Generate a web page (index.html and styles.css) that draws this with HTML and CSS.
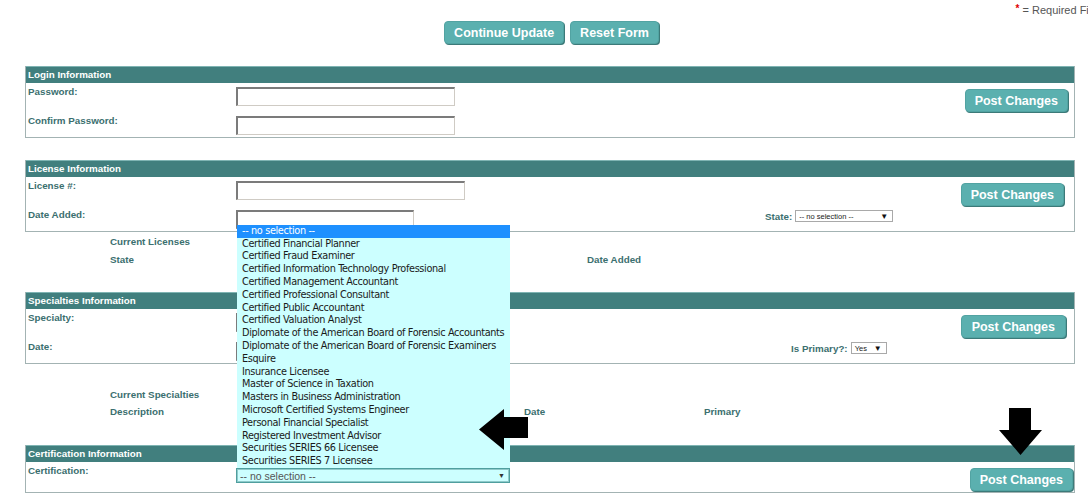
FILE: index.html
```html
<!DOCTYPE html>
<html>
<head>
<meta charset="utf-8">
<title>Update Profile</title>
<link rel="stylesheet" href="styles.css">
</head>
<body>
<div class="req"><span class="star">*</span> = Required Fields</div>
<div class="top-actions">
  <button class="btn btn-top">Continue Update</button>
  <button class="btn btn-top">Reset Form</button>
</div>

<section class="sec sec-login">
  <div class="sec-head">Login Information</div>
  <div class="sec-body">
    <div class="fields">
      <div class="lbl">Password:</div><div><div class="txt w219"></div></div><div></div>
      <div class="lbl">Confirm Password:</div><div><div class="txt w219"></div></div><div></div>
    </div>
    <div class="actions act-login"><button class="btn">Post Changes</button></div>
  </div>
</section>

<section class="sec sec-lic">
  <div class="sec-head">License Information</div>
  <div class="sec-body">
    <div class="fields">
      <div class="lbl">License #:</div><div><div class="txt w229"></div></div><div></div>
      <div class="lbl">Date Added:</div><div><div class="txt w178"></div></div>
      <div class="extra extra-state"><span class="lbl-in">State:</span><div class="mini-sel w98"><span>-- no selection --</span><span class="tri">&#9660;</span></div></div>
    </div>
    <div class="actions act-lic"><button class="btn">Post Changes</button></div>
  </div>
</section>
<div class="list list-lic">
  <div class="span-all">Current Licenses</div>
  <div>State</div><div>Date Added</div>
</div>

<section class="sec sec-spec">
  <div class="sec-head">Specialties Information</div>
  <div class="sec-body">
    <div class="fields">
      <div class="lbl">Specialty:</div><div><div class="txt w219"></div></div><div></div>
      <div class="lbl">Date:</div><div><div class="txt w178"></div></div>
      <div class="extra extra-primary"><span class="lbl-in">Is Primary?:</span><div class="mini-sel w35"><span>Yes</span><span class="tri">&#9660;</span></div></div>
    </div>
    <div class="actions act-spec"><button class="btn btn-wide">Post Changes</button></div>
  </div>
</section>
<div class="list list-spec">
  <div class="span-all">Current Specialties</div>
  <div>Description</div><div>Date</div><div>Primary</div>
</div>

<section class="sec sec-cert">
  <div class="sec-head">Certification Information</div>
  <div class="sec-body">
    <div class="fields">
      <div class="lbl">Certification:</div>
      <div>
        <div class="cert-wrap">
          <ul class="dd-list">
            <li class="cur">-- no selection --</li>
            <li>Certified Financial Planner</li>
            <li>Certified Fraud Examiner</li>
            <li>Certified Information Technology Professional</li>
            <li>Certified Management Accountant</li>
            <li>Certified Professional Consultant</li>
            <li>Certified Public Accountant</li>
            <li>Certified Valuation Analyst</li>
            <li>Diplomate of the American Board of Forensic Accountants</li>
            <li>Diplomate of the American Board of Forensic Examiners</li>
            <li>Esquire</li>
            <li>Insurance Licensee</li>
            <li>Master of Science in Taxation</li>
            <li>Masters in Business Administration</li>
            <li>Microsoft Certified Systems Engineer</li>
            <li>Personal Financial Specialist</li>
            <li>Registered Investment Advisor</li>
            <li>Securities SERIES 66 Licensee</li>
            <li>Securities SERIES 7 Licensee</li>
          </ul>
          <div class="sel-open"><span>-- no selection --</span><span class="tri2">&#9660;</span></div>
        </div>
      </div>
      <div></div>
    </div>
    <div class="actions act-cert"><button class="btn">Post Changes</button></div>
  </div>
</section>

<svg class="arrow arrow-left" width="49" height="41" viewBox="0 0 49 41"><polygon points="0,20.5 25,0 25,8 49,8 49,29 25,29 25,41" fill="#000"/></svg>
<svg class="arrow arrow-down" width="43" height="47" viewBox="0 0 43 47"><polygon points="10,0 32,0 32,22 43,22 21.5,47 0,22 10,22" fill="#000"/></svg>
</body>
</html>
```
FILE: styles.css
```css
html, body {
  margin: 0;
  padding: 0;
  overflow: hidden;
  background: #ffffff;
}
body {
  position: relative;
  width: 1088px;
  height: 504px;
  font-family: "Liberation Sans", Arial, sans-serif;
  color: #3b6f6f;
}

.req {
  text-align: right;
  margin-right: -21px;
  padding-top: 2px;
  font-size: 11px;
  line-height: 14px;
  color: #555555;
  white-space: nowrap;
}
.star {
  color: #e00000;
  font-weight: bold;
  vertical-align: 2px;
  font-size: 10px;
}

.top-actions {
  display: flex;
  justify-content: center;
  gap: 6px;
  margin-top: 4px;
  padding-left: 15px;
}

.btn {
  height: 23px;
  box-sizing: border-box;
  padding: 0 9px;
  font-family: "Liberation Sans", Arial, sans-serif;
  font-weight: bold;
  font-size: 12.5px;
  color: #ffffff;
  background: #5bb0af;
  border: 1px solid #52a3a2;
  border-radius: 4px;
  box-shadow: 1px 1px 0 #3c7a79;
  white-space: nowrap;
}
.btn-wide { padding: 0 10px; }

.sec {
  margin: 22px 0 0 25px;
  width: 1050px;
  box-sizing: border-box;
  border: 1px solid #a3b3b3;
  border-top: 0;
}
.sec-head {
  background: #417f7e;
  border-top: 1px solid #7fb4b3;
  height: 16px;
  line-height: 16px;
  padding-left: 2px;
  color: #ffffff;
  font-weight: bold;
  font-size: 9.8px;
}
.sec-body {
  display: flex;
  align-items: flex-start;
}
.fields {
  flex: 1;
  display: grid;
  grid-template-columns: 208px 500px 1fr;
  row-gap: 10px;
  padding: 4px 0 2px 2px;
  align-items: start;
}
.lbl {
  font-weight: bold;
  font-size: 9.8px;
  line-height: 14px;
  margin-top: -2px;
  color: #3b6f6f;
}
.txt {
  height: 19px;
  box-sizing: border-box;
  background: #ffffff;
  border-style: solid;
  border-width: 2px 1px 1px 2px;
  border-color: #7b7b7b #cfcbc4 #cfcbc4 #7b7b7b;
}
.w219 { width: 219px; }
.w229 { width: 229px; }
.w178 { width: 178px; }

.extra {
  display: flex;
  align-items: center;
  height: 12px;
  gap: 3px;
}
.extra-state { padding-left: 29px; }
.extra-primary { padding-left: 55px; }
.lbl-in {
  font-weight: bold;
  font-size: 9.8px;
  color: #3b6f6f;
}
.mini-sel {
  height: 12px;
  box-sizing: border-box;
  border: 1px solid #a9a9a9;
  background: #ffffff;
  display: flex;
  align-items: center;
  justify-content: space-between;
  padding: 0 4px 0 3px;
  font-size: 7.5px;
  color: #222222;
}
.w98 { width: 98px; }
.w35 { width: 36px; }
.tri { font-size: 8px; color: #111111; }

.actions { padding: 6px 6px 1px 0; }
.act-lic { padding-right: 10px; }
.act-spec { padding-right: 8px; }
.act-cert { padding-right: 1px; }

.list {
  display: grid;
  margin-left: 110px;
  font-weight: bold;
  font-size: 9.8px;
  line-height: 14px;
  color: #3b6f6f;
}
.span-all { grid-column: 1 / -1; }
.list-lic {
  grid-template-columns: 477px auto;
  row-gap: 4px;
  margin-top: 3px;
}
.list-spec {
  grid-template-columns: 414px 180px auto;
  row-gap: 3px;
  margin-top: 24px;
}
.sec-spec { margin-top: 25px; }
.sec-cert { margin-top: 26px; }

.cert-wrap {
  position: relative;
  width: 274px;
  height: 15px;
  margin-top: 2px;
}
.sel-open {
  height: 15px;
  box-sizing: border-box;
  border: 1px solid #4f9f9f;
  box-shadow: 0 0 0 1px #8fcaca inset;
  background: #ccffff;
  display: flex;
  align-items: center;
  justify-content: space-between;
  padding: 0 4px 0 3px;
  font-family: "Liberation Sans", Arial, sans-serif;
  font-size: 10.5px;
  color: #555555;
}
.tri2 { font-size: 7px; color: #333333; }
.dd-list {
  position: absolute;
  left: 1px;
  bottom: 100%;
  width: 273px;
  margin: 0;
  padding: 0;
  list-style: none;
  background: #ccffff;
  z-index: 2;
  font-family: "DejaVu Sans Condensed", "DejaVu Sans", sans-serif;
  font-size: 10.8px;
  letter-spacing: -0.35px;
  color: #1a1a1a;
}
.dd-list li {
  height: 12.8px;
  line-height: 12.8px;
  padding-left: 5px;
  white-space: nowrap;
}
.dd-list li.cur {
  background: #1e90ff;
  color: #ffffff;
}

.arrow { position: absolute; z-index: 3; }
.arrow-left { left: 479px; top: 409px; }
.arrow-down { left: 999px; top: 408px; }
```
